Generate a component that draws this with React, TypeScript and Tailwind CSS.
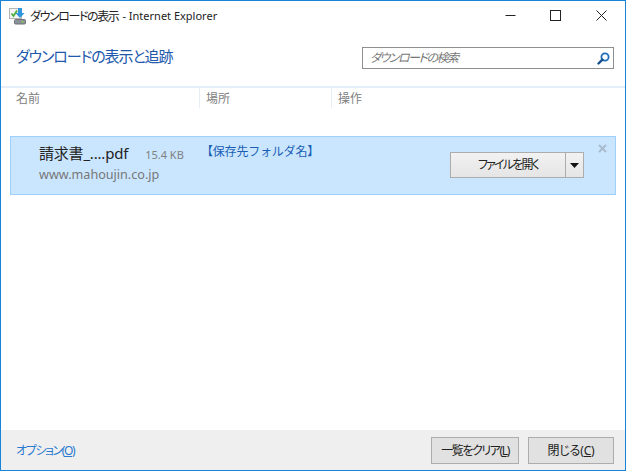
import React from 'react';

const FONT = 'font-["Noto_Sans","Noto_Sans_CJK_JP",sans-serif] [font-feature-settings:"palt"]';

const DownloadIcon = () => (
  <svg width="17" height="18" viewBox="0 0 17 18">
    <rect x="0.5" y="1.5" width="12" height="10" fill="#f4f4f4" stroke="#b5b5b5" />
    <path d="M2.5 6.5 L4.5 9 L8 3.5" fill="none" stroke="#4fb03c" strokeWidth="1.8" />
    <path d="M9 1 h4 v5 h2.5 L11 11 L6.5 6 H9 Z" fill="#2f95dc" />
    <rect x="5.5" y="12.5" width="11" height="4.5" rx="1" fill="#8c9298" stroke="#6d7378" />
    <rect x="12.5" y="14" width="2" height="1.5" fill="#7fd04f" />
  </svg>
);

const WindowControls = () => (
  <div className="flex items-center">
    <svg width="11" height="11" viewBox="0 0 11 11" className="mr-[34px]">
      <path d="M0.5 5.5 H10.5" stroke="#222" strokeWidth="1" />
    </svg>
    <svg width="11" height="11" viewBox="0 0 11 11" className="mr-[35px]">
      <rect x="0.5" y="0.5" width="10" height="10" fill="none" stroke="#222" strokeWidth="1" />
    </svg>
    <svg width="11" height="11" viewBox="0 0 11 11">
      <path d="M0.5 0.5 L10.5 10.5 M10.5 0.5 L0.5 10.5" stroke="#222" strokeWidth="1" />
    </svg>
  </div>
);

const SearchIcon = () => (
  <svg width="13" height="13" viewBox="0 0 13 13">
    <circle cx="8" cy="5" r="3.6" fill="none" stroke="#1f6fb8" strokeWidth="1.8" />
    <path d="M5.4 7.6 L1.5 11.5" stroke="#14508c" strokeWidth="2.4" strokeLinecap="round" />
  </svg>
);

const FooterButton: React.FC<{ label: string; hotkey: string; className: string }> = ({ label, hotkey, className }) => (
  <button className={`${className} h-[27px] pt-[1px] border border-[#adadad] bg-[#e1e1e1] text-[12px] text-[#222]`}>
    {label}(<span className="underline">{hotkey}</span>)
  </button>
);

export default function App() {
  return (
    <div className={`${FONT} w-[626px] h-[471px] flex flex-col bg-white border border-[#1883d7] overflow-hidden`}>
      {/* title bar */}
      <div className="h-[29px] shrink-0 flex items-center pl-[8px] pr-[18px]">
        <DownloadIcon />
        <span className="ml-[4px] pt-[2px] text-[12px] tracking-[-1.4px] text-[#222]">ダウンロードの表示</span>
        <span className="ml-[4px] pt-[2px] text-[11px] text-[#222]">- Internet Explorer</span>
        <div className="ml-auto">
          <WindowControls />
        </div>
      </div>

      {/* heading and search */}
      <div className="h-[56px] shrink-0 flex items-start justify-between pl-[15px] pr-[11px]">
        <h1 className="mt-[14px] text-[15px] leading-[24px] tracking-[-1.1px] text-[#2158ab]">ダウンロードの表示と追跡</h1>
        <div className="mt-[17px] w-[252px] h-[22px] flex items-center justify-between border border-[#8f8f8f] pl-[7px] pr-[3px]">
          <span className="text-[12px] italic tracking-[-1.5px] text-[#777]">ダウンロードの検索</span>
          <SearchIcon />
        </div>
      </div>

      {/* column headers */}
      <div className="h-[22px] shrink-0 flex items-center border-t-2 border-[#e3eefa] text-[12px] text-[#808080]">
        <div className="w-[199px] h-full flex items-center pl-[15px] pt-[2px] border-r border-[#e6eef7]">名前</div>
        <div className="w-[132px] h-full flex items-center pl-[6px] pt-[2px] border-r border-[#e6eef7]">場所</div>
        <div className="pl-[6px] pt-[2px]">操作</div>
      </div>

      {/* download row */}
      <div className="relative mt-[28px] ml-[9px] w-[606px] h-[59px] shrink-0 flex bg-[#cae6ff] border border-[#9fd0fb]">
        <div className="w-[190px] pl-[28px] pt-[5px]">
          <div className="flex items-baseline">
            <span className="text-[15px] leading-[22px] tracking-[-0.2px] text-[#222]">請求書_....pdf</span>
            <span className="ml-[17px] text-[11px] text-[#808080]">15.4 KB</span>
          </div>
          <div className="mt-[2px] text-[12.6px] leading-[18px] text-[#777]">www.mahoujin.co.jp</div>
        </div>
        <div className="pt-[6px] text-[12px] leading-[18px] tracking-[-0.2px] [font-feature-settings:normal] text-[#1a5fb4]">【保存先フォルダ名】</div>
        <div className="ml-auto mr-[31px] mt-[15px] h-[26px] flex border border-[#adadad] bg-gradient-to-b from-[#f2f2f2] to-[#e5e5e5]">
          <div className="w-[114px] flex items-center justify-center text-[12px] tracking-[-1.8px] text-[#222]">ファイルを開く</div>
          <div className="w-[18px] flex items-center justify-center border-l border-[#adadad]">
            <svg width="9" height="5" viewBox="0 0 9 5">
              <path d="M0 0 H9 L4.5 5 Z" fill="#111" />
            </svg>
          </div>
        </div>
        <svg width="9" height="9" viewBox="0 0 9 9" className="absolute right-[8px] top-[7px]">
          <path d="M1 1 L8 8 M8 1 L1 8" stroke="#a9bccd" strokeWidth="2" />
        </svg>
      </div>

      {/* footer */}
      <div className="mt-auto h-[40px] shrink-0 flex items-center bg-[#efefef] pl-[15px] pr-[11px]">
        <a className="pt-[1px] text-[12px] tracking-[-1.4px] text-[#2a7ad0]">
          オプション(<span className="underline">O</span>)
        </a>
        <div className="ml-auto flex gap-[9px]">
          <FooterButton label="一覧をクリア" hotkey="L" className="w-[88px] tracking-[-1.4px]" />
          <FooterButton label="閉じる" hotkey="C" className="w-[86px] tracking-[-0.2px]" />
        </div>
      </div>
    </div>
  );
}
